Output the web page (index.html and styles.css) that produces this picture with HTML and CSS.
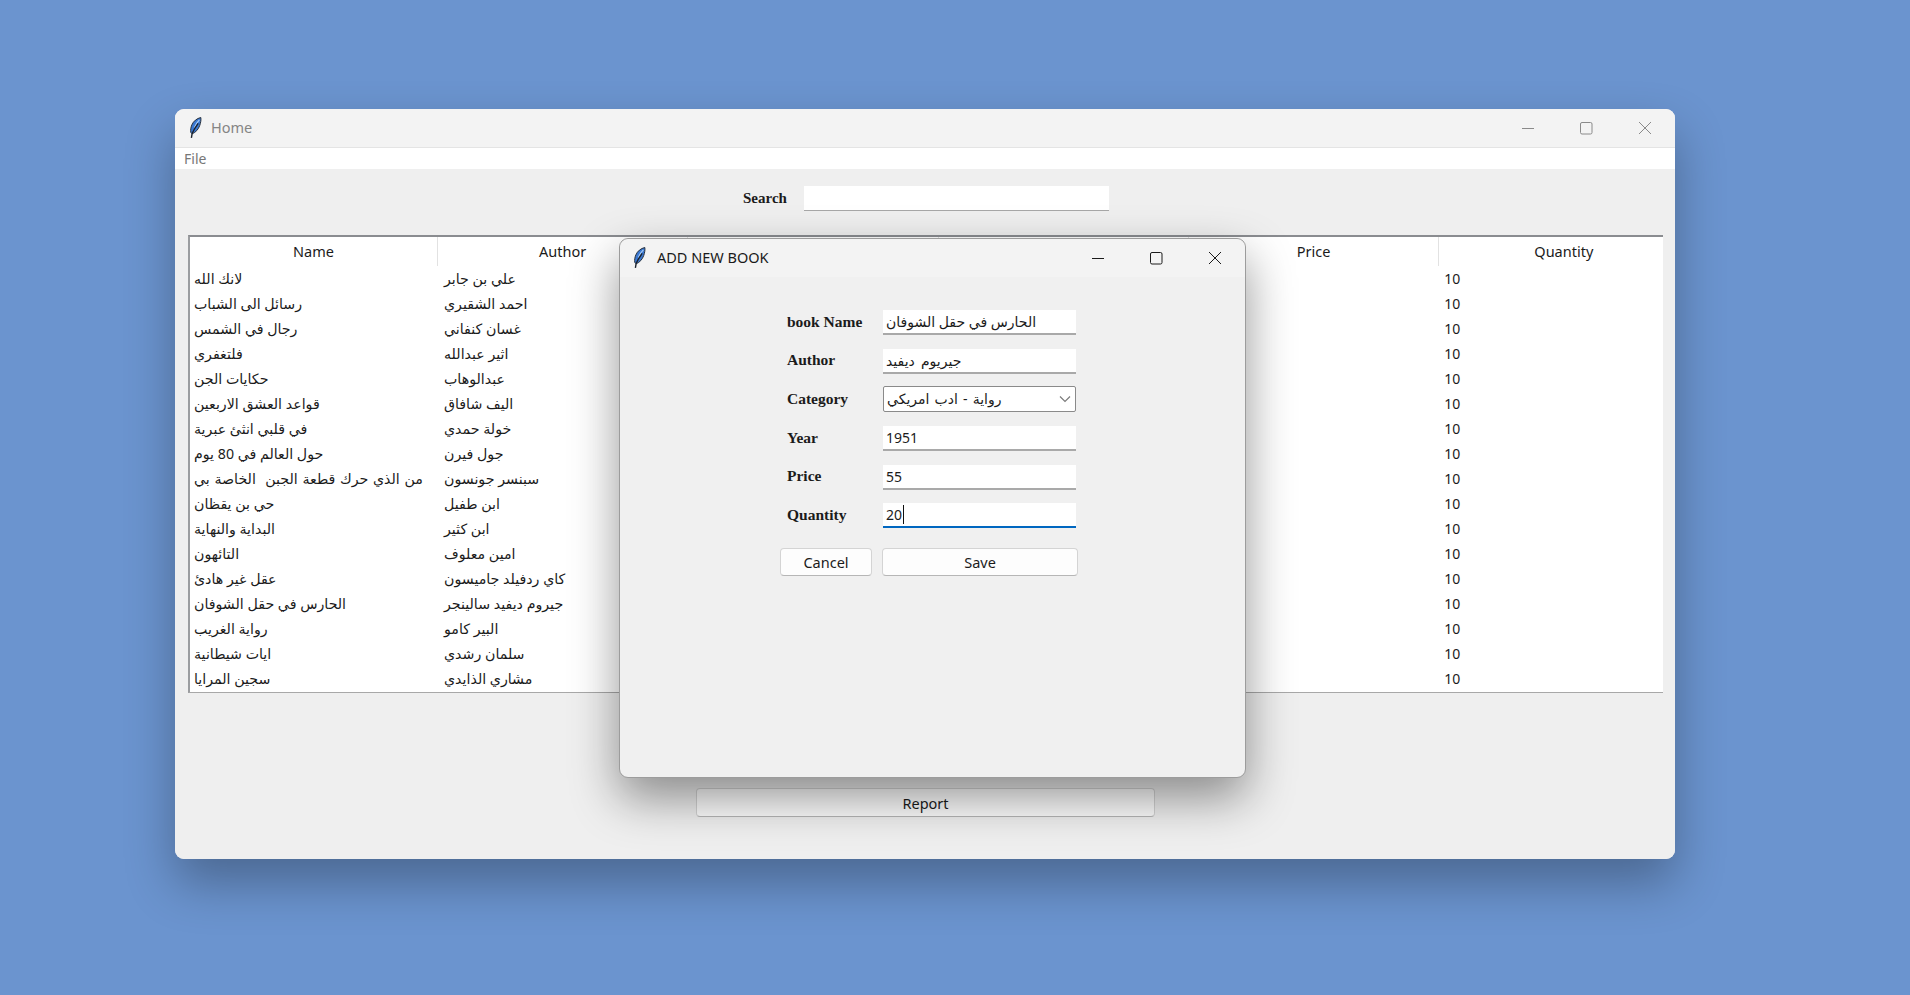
FILE: index.html
```html
<!DOCTYPE html>
<html lang="en">
<head>
<meta charset="utf-8">
<title>Home</title>
<link rel="stylesheet" href="styles.css">
</head>
<body>
<svg class="defs" width="0" height="0" aria-hidden="true">
  <symbol id="feather" viewBox="0 0 14 22">
    <path d="M12.8 0.5C9 1.4 5.4 4 3.8 8C2.8 10.5 2.4 13 2.8 15.4L4.2 16.8C7.8 15.4 10.4 12.2 11.7 8.6C12.7 5.6 13.2 3 12.8 0.5Z" fill="#3a78d2" stroke="#27303c" stroke-width="1"/>
    <path d="M11.4 2.8C9.2 5 7.4 7.6 6.4 10.6" fill="none" stroke="#a6cbf4" stroke-width="1.2"/>
    <path d="M10.2 6.4C8 9.4 5.8 12.8 4.2 16.2L3.4 20.8" fill="none" stroke="#1b222c" stroke-width="1.4"/>
  </symbol>
</svg>

<main class="window main-window">
  <header class="titlebar titlebar-main">
    <svg class="app-icon"><use href="#feather"/></svg>
    <span class="window-title muted">Home</span>
    <div class="controls muted-controls">
      <span class="control"><svg width="14" height="14" viewBox="0 0 14 14"><path d="M1 7.5H13" /></svg></span>
      <span class="control"><svg width="14" height="14" viewBox="0 0 14 14"><rect x="1.5" y="1.5" width="11.5" height="11.5" rx="1.5"/></svg></span>
      <span class="control"><svg width="14" height="14" viewBox="0 0 14 14"><path d="M1 1L13 13M13 1L1 13"/></svg></span>
    </div>
  </header>
  <nav class="menubar"><span class="menu-item">File</span></nav>
  <section class="content">
    <div class="search-row">
      <label class="search-label">Search</label>
      <div class="search-box"></div>
    </div>
    <div class="tree">
      <div class="tree-row tree-head">
        <div class="head-cell">Name</div>
        <div class="head-cell">Author</div>
        <div class="head-cell">Category</div>
        <div class="head-cell">Year</div>
        <div class="head-cell">Price</div>
        <div class="head-cell">Quantity</div>
      </div>
      <div class="tree-row"><div class="cell">لانك الله</div><div class="cell">علي بن جابر</div><div class="cell"></div><div class="cell"></div><div class="cell"></div><div class="cell">10</div></div>
      <div class="tree-row"><div class="cell">رسائل الى الشباب</div><div class="cell">احمد الشقيري</div><div class="cell"></div><div class="cell"></div><div class="cell"></div><div class="cell">10</div></div>
      <div class="tree-row"><div class="cell">رجال في الشمس</div><div class="cell">غسان كنفاني</div><div class="cell"></div><div class="cell"></div><div class="cell"></div><div class="cell">10</div></div>
      <div class="tree-row"><div class="cell">فلتغفري</div><div class="cell">اثير عبدالله</div><div class="cell"></div><div class="cell"></div><div class="cell"></div><div class="cell">10</div></div>
      <div class="tree-row"><div class="cell">حكايات الجن</div><div class="cell">عبدالوهاب</div><div class="cell"></div><div class="cell"></div><div class="cell"></div><div class="cell">10</div></div>
      <div class="tree-row"><div class="cell">قواعد العشق الاربعين</div><div class="cell">اليف شافاق</div><div class="cell"></div><div class="cell"></div><div class="cell"></div><div class="cell">10</div></div>
      <div class="tree-row"><div class="cell">في قلبي انثئ عبرية</div><div class="cell">خولة حمدي</div><div class="cell"></div><div class="cell"></div><div class="cell"></div><div class="cell">10</div></div>
      <div class="tree-row"><div class="cell">حول العالم في 80 يوم</div><div class="cell">جول فيرن</div><div class="cell"></div><div class="cell"></div><div class="cell"></div><div class="cell">10</div></div>
      <div class="tree-row"><div class="cell spaced">من الذي حرك قطعة الجبن&nbsp; الخاصة بي</div><div class="cell">سبنسر جونسون</div><div class="cell"></div><div class="cell"></div><div class="cell"></div><div class="cell">10</div></div>
      <div class="tree-row"><div class="cell">حي بن يقظان</div><div class="cell">ابن طفيل</div><div class="cell"></div><div class="cell"></div><div class="cell"></div><div class="cell">10</div></div>
      <div class="tree-row"><div class="cell">البداية والنهاية</div><div class="cell">ابن كثير</div><div class="cell"></div><div class="cell"></div><div class="cell"></div><div class="cell">10</div></div>
      <div class="tree-row"><div class="cell">التائهون</div><div class="cell">امين معلوف</div><div class="cell"></div><div class="cell"></div><div class="cell"></div><div class="cell">10</div></div>
      <div class="tree-row"><div class="cell">عقل غير هادئ</div><div class="cell">كاي ردفيلد جاميسون</div><div class="cell"></div><div class="cell"></div><div class="cell"></div><div class="cell">10</div></div>
      <div class="tree-row"><div class="cell">الحارس في حقل الشوفان</div><div class="cell">جيروم ديفيد سالينجر</div><div class="cell"></div><div class="cell"></div><div class="cell"></div><div class="cell">10</div></div>
      <div class="tree-row"><div class="cell">رواية الغريب</div><div class="cell">البير كامو</div><div class="cell"></div><div class="cell"></div><div class="cell"></div><div class="cell">10</div></div>
      <div class="tree-row"><div class="cell">ايات شيطانية</div><div class="cell">سلمان رشدي</div><div class="cell"></div><div class="cell"></div><div class="cell"></div><div class="cell">10</div></div>
      <div class="tree-row"><div class="cell">سجين المرايا</div><div class="cell">مشاري الذايدي</div><div class="cell"></div><div class="cell"></div><div class="cell"></div><div class="cell">10</div></div>
    </div>
    <div class="report-row"><button class="btn report-btn">Report</button></div>
  </section>
</main>

<aside class="window dialog">
  <header class="titlebar titlebar-dialog">
    <svg class="app-icon"><use href="#feather"/></svg>
    <span class="window-title">ADD NEW BOOK</span>
    <div class="controls">
      <span class="control"><svg width="14" height="14" viewBox="0 0 14 14"><path d="M1 7.5H13"/></svg></span>
      <span class="control"><svg width="14" height="14" viewBox="0 0 14 14"><rect x="1.5" y="1.5" width="11.5" height="11.5" rx="1.5"/></svg></span>
      <span class="control"><svg width="14" height="14" viewBox="0 0 14 14"><path d="M1 1L13 13M13 1L1 13"/></svg></span>
    </div>
  </header>
  <form class="form">
    <label class="form-label">book Name</label><div class="field">الحارس في حقل الشوفان</div>
    <label class="form-label">Author</label><div class="field wide-word">جيريوم ديفيد</div>
    <label class="form-label">Category</label>
    <div class="field select"><span>رواية - ادب امريكي</span><svg width="12" height="8" viewBox="0 0 12 8"><path d="M1 1.5L6 6.5L11 1.5"/></svg></div>
    <label class="form-label">Year</label><div class="field">1951</div>
    <label class="form-label">Price</label><div class="field">55</div>
    <label class="form-label">Quantity</label><div class="field focused"><span class="typed">20</span></div>
    <div class="actions">
      <button type="button" class="btn cancel-btn">Cancel</button>
      <button type="button" class="btn save-btn">Save</button>
    </div>
  </form>
</aside>
</body>
</html>
```
FILE: styles.css
```css
* { box-sizing: border-box; }

html, body {
  margin: 0;
  height: 995px;
  overflow: hidden;
}

body {
  position: relative;
  background: #6b94cf;
  color: #1b1b1b;
  font-family: "Noto Sans", "DejaVu Sans", sans-serif;
  font-size: 15px;
}

.defs { position: absolute; }

.window {
  position: absolute;
  display: flex;
  flex-direction: column;
  border-radius: 9px;
  background: #efefef;
}

.main-window {
  left: 175px;
  top: 109px;
  width: 1500px;
  height: 750px;
  box-shadow: 0 24px 50px rgba(0, 0, 0, 0.3);
}

.dialog {
  left: 619px;
  top: 238px;
  width: 627px;
  height: 540px;
  background: #f0f0f0;
  border: 1px solid #9c9c9c;
  box-shadow: 0 20px 48px rgba(0, 0, 0, 0.42);
  overflow: hidden;
}

.titlebar {
  display: flex;
  align-items: center;
  flex: none;
  background: #f3f3f3;
  border-radius: 9px 9px 0 0;
}

.titlebar-main {
  height: 39px;
  padding-left: 13px;
  padding-right: 1px;
  border-bottom: 1px solid #e4e4e4;
}

.titlebar-dialog {
  height: 38px;
  padding-left: 12px;
  padding-right: 1px;
}

.app-icon {
  width: 14px;
  height: 22px;
  flex: none;
}

.window-title {
  margin: 0 0 2px 9px;
  font-size: 14.5px;
  color: #1a1a1a;
}

.titlebar-dialog .window-title { margin-left: 11px; }

.window-title.muted { color: #858585; }

.controls {
  display: flex;
  margin-left: auto;
}

.control {
  display: flex;
  align-items: center;
  justify-content: center;
  width: 58.5px;
  height: 38px;
}

.control svg {
  fill: none;
  stroke: #1a1a1a;
  stroke-width: 1;
}

.muted-controls .control svg { stroke: #8a8a8a; }

.menubar {
  flex: none;
  height: 21px;
  padding-left: 9px;
  background: #fff;
  font-size: 14px;
  line-height: 21px;
  color: #777;
}

.content {
  display: flex;
  flex: 1;
  flex-direction: column;
  padding: 0 12px 0 13px;
  background: #efefef;
  border-radius: 0 0 9px 9px;
}

.search-row {
  display: flex;
  align-items: center;
  height: 25px;
  margin: 17px 0 0 555px;
}

.search-label {
  width: 61px;
  font-family: "Liberation Serif", serif;
  font-weight: 700;
  font-size: 15px;
}

.search-box {
  width: 305px;
  height: 25px;
  background: #fff;
  border-bottom: 1px solid #a8a8a8;
}

.tree {
  height: 458px;
  margin-top: 24px;
  overflow: hidden;
  background: #fff;
  border-top: 2px solid #8a8c90;
  border-left: 2px solid #9b9da0;
  border-bottom: 1px solid #a8a8a8;
}

.tree-row {
  display: grid;
  grid-template-columns: 248px repeat(5, 250.3px);
  height: 25px;
  white-space: nowrap;
}

.tree-head { height: 29px; }

.head-cell {
  text-align: center;
  line-height: 28px;
  font-size: 14.5px;
  border-right: 1px solid #e2e2e2;
}

.cell {
  padding-left: 5px;
  line-height: 26px;
  font-size: 14.2px;
  text-align: left;
  overflow: hidden;
}

.cell:nth-child(1) { padding-left: 4px; }
.cell:nth-child(2) { padding-left: 6px; }
.cell:nth-child(6) { font-size: 14px; }
.cell.spaced { word-spacing: 1px; }

.report-row {
  display: flex;
  margin: 95px 0 0 508px;
}

.btn {
  height: 28px;
  padding: 0;
  background: #fdfdfd;
  border: 1px solid #d4d4d4;
  border-bottom-color: #b6b6b6;
  border-radius: 4px;
  color: #1b1b1b;
  font-family: "Noto Sans", "DejaVu Sans", sans-serif;
  font-size: 14.5px;
}

.report-btn {
  width: 459px;
  height: 29px;
}

.form {
  display: grid;
  grid-template-columns: 96px 193px;
  grid-auto-rows: 25px;
  row-gap: 13.7px;
  align-items: center;
  margin: 33px 0 0 167px;
}

.form-label {
  position: relative;
  top: -1px;
  font-family: "Liberation Serif", serif;
  font-weight: 700;
  font-size: 15.5px;
}

.field {
  height: 25px;
  padding-left: 3px;
  background: #fff;
  border-bottom: 2px solid #a9a9a9;
  font-size: 14px;
  line-height: 23px;
  white-space: nowrap;
}

.wide-word { word-spacing: 2.5px; }

.select {
  display: flex;
  align-items: center;
  justify-content: space-between;
  height: 26px;
  margin-top: -1px;
  padding-right: 4px;
  border: 1px solid #8a8a8a;
  border-radius: 2px;
  line-height: 24px;
  word-spacing: 1.5px;
}

.select svg {
  fill: none;
  stroke: #7b7b7b;
  stroke-width: 1.2;
}

.focused { border-bottom-color: #0067c0; }

.typed {
  padding-right: 1px;
  border-right: 1px solid #111;
}

.actions {
  display: grid;
  grid-column: 1 / 3;
  grid-template-columns: 92px 196px;
  column-gap: 10px;
  align-self: start;
  height: 28px;
  margin: 6px 0 0 -7px;
}

.actions .btn { height: 28px; }
```
